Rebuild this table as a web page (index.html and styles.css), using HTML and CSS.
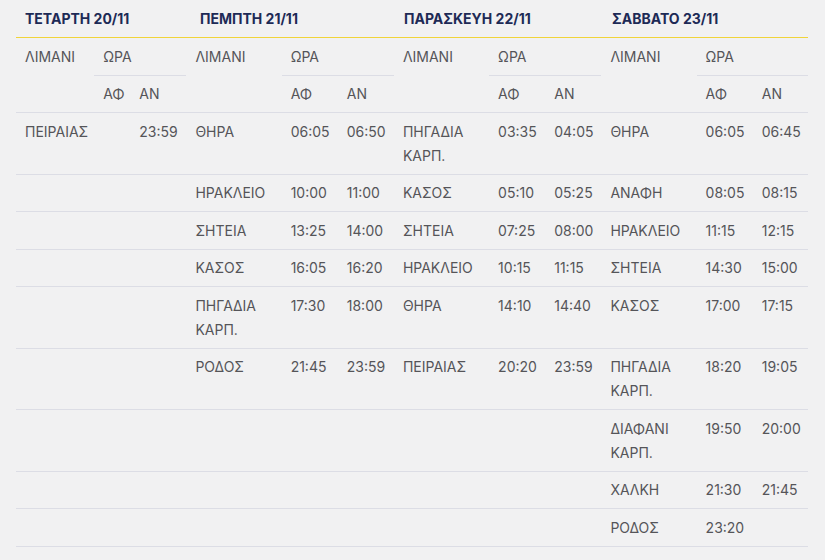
FILE: index.html
```html
<!DOCTYPE html>
<html lang="el">
<head>
<meta charset="utf-8">
<title>Δρομολόγια</title>
<link rel="stylesheet" href="styles.css">
</head>
<body>
<div class="schedule">
  <div class="days">
    <div class="day">ΤΕΤΑΡΤΗ 20/11</div>
    <div class="day">ΠΕΜΠΤΗ 21/11</div>
    <div class="day">ΠΑΡΑΣΚΕΥΗ 22/11</div>
    <div class="day">ΣΑΒΒΑΤΟ 23/11</div>
  </div>
  <table class="times">
    <colgroup>
      <col class="c-port1"><col class="c-af1"><col class="c-an">
      <col class="c-port"><col class="c-an"><col class="c-an">
      <col class="c-port"><col class="c-an"><col class="c-an">
      <col class="c-port"><col class="c-an"><col class="c-an-last">
    </colgroup>
    <thead>
      <tr>
        <th rowspan="2">ΛΙΜΑΝΙ</th><th colspan="2">ΩΡΑ</th>
        <th rowspan="2">ΛΙΜΑΝΙ</th><th colspan="2">ΩΡΑ</th>
        <th rowspan="2">ΛΙΜΑΝΙ</th><th colspan="2">ΩΡΑ</th>
        <th rowspan="2">ΛΙΜΑΝΙ</th><th colspan="2">ΩΡΑ</th>
      </tr>
      <tr>
        <th>ΑΦ</th><th>ΑΝ</th>
        <th>ΑΦ</th><th>ΑΝ</th>
        <th>ΑΦ</th><th>ΑΝ</th>
        <th>ΑΦ</th><th>ΑΝ</th>
      </tr>
    </thead>
    <tbody>
      <tr>
        <td>ΠΕΙΡΑΙΑΣ</td><td></td><td>23:59</td>
        <td>ΘΗΡΑ</td><td>06:05</td><td>06:50</td>
        <td>ΠΗΓΑΔΙΑ ΚΑΡΠ.</td><td>03:35</td><td>04:05</td>
        <td>ΘΗΡΑ</td><td>06:05</td><td>06:45</td>
      </tr>
      <tr>
        <td></td><td></td><td></td>
        <td>ΗΡΑΚΛΕΙΟ</td><td>10:00</td><td>11:00</td>
        <td>ΚΑΣΟΣ</td><td>05:10</td><td>05:25</td>
        <td>ΑΝΑΦΗ</td><td>08:05</td><td>08:15</td>
      </tr>
      <tr>
        <td></td><td></td><td></td>
        <td>ΣΗΤΕΙΑ</td><td>13:25</td><td>14:00</td>
        <td>ΣΗΤΕΙΑ</td><td>07:25</td><td>08:00</td>
        <td>ΗΡΑΚΛΕΙΟ</td><td>11:15</td><td>12:15</td>
      </tr>
      <tr>
        <td></td><td></td><td></td>
        <td>ΚΑΣΟΣ</td><td>16:05</td><td>16:20</td>
        <td>ΗΡΑΚΛΕΙΟ</td><td>10:15</td><td>11:15</td>
        <td>ΣΗΤΕΙΑ</td><td>14:30</td><td>15:00</td>
      </tr>
      <tr>
        <td></td><td></td><td></td>
        <td>ΠΗΓΑΔΙΑ ΚΑΡΠ.</td><td>17:30</td><td>18:00</td>
        <td>ΘΗΡΑ</td><td>14:10</td><td>14:40</td>
        <td>ΚΑΣΟΣ</td><td>17:00</td><td>17:15</td>
      </tr>
      <tr>
        <td></td><td></td><td></td>
        <td>ΡΟΔΟΣ</td><td>21:45</td><td>23:59</td>
        <td>ΠΕΙΡΑΙΑΣ</td><td>20:20</td><td>23:59</td>
        <td>ΠΗΓΑΔΙΑ ΚΑΡΠ.</td><td>18:20</td><td>19:05</td>
      </tr>
      <tr>
        <td></td><td></td><td></td>
        <td></td><td></td><td></td>
        <td></td><td></td><td></td>
        <td>ΔΙΑΦΑΝΙ ΚΑΡΠ.</td><td>19:50</td><td>20:00</td>
      </tr>
      <tr>
        <td></td><td></td><td></td>
        <td></td><td></td><td></td>
        <td></td><td></td><td></td>
        <td>ΧΑΛΚΗ</td><td>21:30</td><td>21:45</td>
      </tr>
      <tr>
        <td></td><td></td><td></td>
        <td></td><td></td><td></td>
        <td></td><td></td><td></td>
        <td>ΡΟΔΟΣ</td><td>23:20</td><td></td>
      </tr>
    </tbody>
  </table>
</div>
</body>
</html>
```
FILE: styles.css
```css
html, body {
  margin: 0;
  background: #f1f1f2;
}

body {
  font-family: Inter, "Open Sans", "Noto Sans", sans-serif;
  font-size: 14px;
  color: #555559;
}

.schedule {
  margin-left: 16px;
  width: 792px;
}

.days {
  display: grid;
  grid-template-columns: 175px 204px 208px 205px;
  border-bottom: 1px solid #f0d43a;
}

.day {
  padding: 6.5px 9px;
  line-height: 24px;
  font-weight: 700;
  color: #1d2a56;
  white-space: nowrap;
}

.times {
  width: 792px;
  border-collapse: collapse;
  table-layout: fixed;
}

.c-port1 { width: 78px; }
.c-af1 { width: 36px; }
.c-port { width: 95px; }
.c-an { width: 56px; }
.c-an-last { width: 55px; }

.times th,
.times td {
  padding: 6.5px 9px 6px;
  line-height: 24px;
  text-align: left;
  vertical-align: top;
  font-weight: 400;
  border-bottom: 1px solid #dcdde5;
}
```
